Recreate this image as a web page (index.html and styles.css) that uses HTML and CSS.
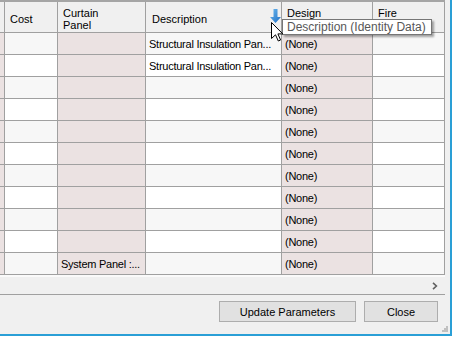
FILE: index.html
```html
<!DOCTYPE html>
<html>
<head>
<meta charset="utf-8">
<link rel="stylesheet" href="styles.css">
</head>
<body>
<div class="window">
  <div class="gridbox">
    <div class="grid">
      <div class="hc h0"></div>
      <div class="hc"><span>Cost</span></div>
      <div class="hc"><span>Curtain<br>Panel</span></div>
      <div class="hc"><span class="hdesc">Description</span></div>
      <div class="hc top"><span>Design</span></div>
      <div class="hc top"><span>Fire</span></div>

      <div class="c ro"></div><div class="c alt"></div><div class="c ro"></div><div class="c alt">Structural Insulation Pan...</div><div class="c ro">(None)</div><div class="c alt"></div>
      <div class="c ro"></div><div class="c"></div><div class="c ro"></div><div class="c">Structural Insulation Pan...</div><div class="c ro">(None)</div><div class="c"></div>
      <div class="c ro"></div><div class="c alt"></div><div class="c ro"></div><div class="c alt"></div><div class="c ro">(None)</div><div class="c alt"></div>
      <div class="c ro"></div><div class="c"></div><div class="c ro"></div><div class="c"></div><div class="c ro">(None)</div><div class="c"></div>
      <div class="c ro"></div><div class="c alt"></div><div class="c ro"></div><div class="c alt"></div><div class="c ro">(None)</div><div class="c alt"></div>
      <div class="c ro"></div><div class="c"></div><div class="c ro"></div><div class="c"></div><div class="c ro">(None)</div><div class="c"></div>
      <div class="c ro"></div><div class="c alt"></div><div class="c ro"></div><div class="c alt"></div><div class="c ro">(None)</div><div class="c alt"></div>
      <div class="c ro"></div><div class="c"></div><div class="c ro"></div><div class="c"></div><div class="c ro">(None)</div><div class="c"></div>
      <div class="c ro"></div><div class="c alt"></div><div class="c ro"></div><div class="c alt"></div><div class="c ro">(None)</div><div class="c alt"></div>
      <div class="c ro"></div><div class="c"></div><div class="c ro"></div><div class="c"></div><div class="c ro">(None)</div><div class="c"></div>
      <div class="c ro"></div><div class="c alt"></div><div class="c ro">System Panel :...</div><div class="c alt"></div><div class="c ro">(None)</div><div class="c alt"></div>
    </div>
    <div class="hscroll">
      <svg class="chev" width="6" height="8" viewBox="0 0 6 8"><path d="M1 0.8 L4.4 4 L1 7.2" fill="none" stroke="#606060" stroke-width="1.6"/></svg>
    </div>
  </div>
  <div class="footer">
    <button class="btn btn-update">Update Parameters</button>
    <button class="btn btn-close">Close</button>
    <svg class="grip" width="6" height="6" viewBox="0 0 6 6">
      <rect x="4" y="0" width="2" height="2" fill="#c0c0c0"/>
      <rect x="2" y="2" width="2" height="2" fill="#c0c0c0"/>
      <rect x="4" y="2" width="2" height="2" fill="#c0c0c0"/>
      <rect x="0" y="4" width="2" height="2" fill="#c0c0c0"/>
      <rect x="2" y="4" width="2" height="2" fill="#c0c0c0"/>
      <rect x="4" y="4" width="2" height="2" fill="#c0c0c0"/>
    </svg>
  </div>

  <svg class="sortarrow" width="11" height="14" viewBox="0 0 11 14">
    <defs>
      <linearGradient id="bg" x1="0" y1="0" x2="1" y2="1">
        <stop offset="0" stop-color="#6cb8ef"/>
        <stop offset="1" stop-color="#1f6fc4"/>
      </linearGradient>
    </defs>
    <path d="M3.5 0 H7.5 V8 H11 L5.5 14 L0 8 H3.5 Z" fill="url(#bg)"/>
  </svg>
  <div class="tooltip">Description (Identity Data)</div>
  <svg class="cursor" width="13" height="20" viewBox="0 0 13 20">
    <path d="M0.5 0.5 L0.5 16.5 L4.5 12.8 L7.3 19 L9.6 18 L6.9 11.9 L11.8 11.9 Z" fill="#fff" stroke="#000" stroke-width="1"/>
  </svg>
</div>
<div class="behind"><span>Typical Wall Roof Connection</span></div>
</body>
</html>
```

FILE: styles.css
```css
html, body {
  margin: 0;
  padding: 0;
}
body {
  width: 453px;
  height: 337px;
  overflow: hidden;
  background: #ffffff;
  font-family: "Liberation Sans", Arial, sans-serif;
  font-size: 11px;
  color: #000;
}
.window {
  position: relative;
  width: 450px;
  height: 334px;
  background: #f0f0f0;
  border-right: 2px solid #2a9fd6;
  border-bottom: 2px solid #2a9fd6;
  display: flex;
  flex-direction: column;
}
.gridbox {
  width: 445px;
  border-top: 2px solid #a5a5a5;
  border-bottom: 1px solid #a0a0a0;
  display: flex;
  flex-direction: column;
}
.grid {
  display: grid;
  grid-template-columns: 5px 53px 88px 136px 91px 72px;
  grid-auto-rows: 22px;
  grid-template-rows: 31px;
}
.hc, .c {
  box-sizing: border-box;
  border-right: 1px solid #a0a0a0;
  border-bottom: 1px solid #a0a0a0;
  overflow: hidden;
  white-space: nowrap;
}
.hc {
  background: #f0f0f0;
  padding: 3px 0 0 5px;
  display: flex;
  align-items: center;
  line-height: 12px;
}
.hc.top {
  align-items: flex-start;
  padding-top: 5px;
}
.h0 { padding: 0; }
.hdesc { margin-left: 1px; }
.c {
  background: #ffffff;
  padding-left: 3px;
  display: flex;
  align-items: center;
  letter-spacing: -0.25px;
}
.c.alt { background: #f7f7f7; }
.c.ro { background: #ebe2e2; }
.hscroll {
  height: 19px;
  box-sizing: border-box;
  border-top: 2px solid #fafafa;
  background: #f0f0f0;
  display: flex;
  justify-content: flex-end;
  align-items: center;
  padding-right: 7px;
}
.chev { display: block; }
.footer {
  flex: 1;
  position: relative;
  display: flex;
  justify-content: flex-end;
  align-items: flex-start;
  padding: 6px 12px 0 0;
  gap: 8px;
}
.btn {
  height: 21px;
  box-sizing: border-box;
  background: #e1e1e1;
  border: 1px solid #adadad;
  font-family: "Liberation Sans", Arial, sans-serif;
  font-size: 11px;
  color: #000;
  padding: 0;
  margin: 0;
}
.btn-update { width: 137px; }
.btn-close { width: 74px; }
.grip {
  position: absolute;
  right: 2px;
  bottom: 2px;
}
.sortarrow {
  position: absolute;
  left: 270px;
  top: 9px;
}
.tooltip {
  position: absolute;
  left: 282px;
  top: 19px;
  width: 150px;
  height: 16px;
  box-sizing: border-box;
  background: #ffffff;
  border: 1px solid #767676;
  box-shadow: 2px 2px 2px rgba(0, 0, 0, 0.35);
  font-size: 12px;
  line-height: 14px;
  color: #575757;
  padding-left: 4px;
  white-space: nowrap;
}
.cursor {
  position: absolute;
  left: 271px;
  top: 22px;
}
.behind {
  height: 1px;
  overflow: hidden;
  background: #ffffff;
  padding-left: 145px;
}
.behind span {
  display: block;
  font-size: 13px;
  line-height: 13px;
  margin-top: -1px;
  color: #222;
}
```
